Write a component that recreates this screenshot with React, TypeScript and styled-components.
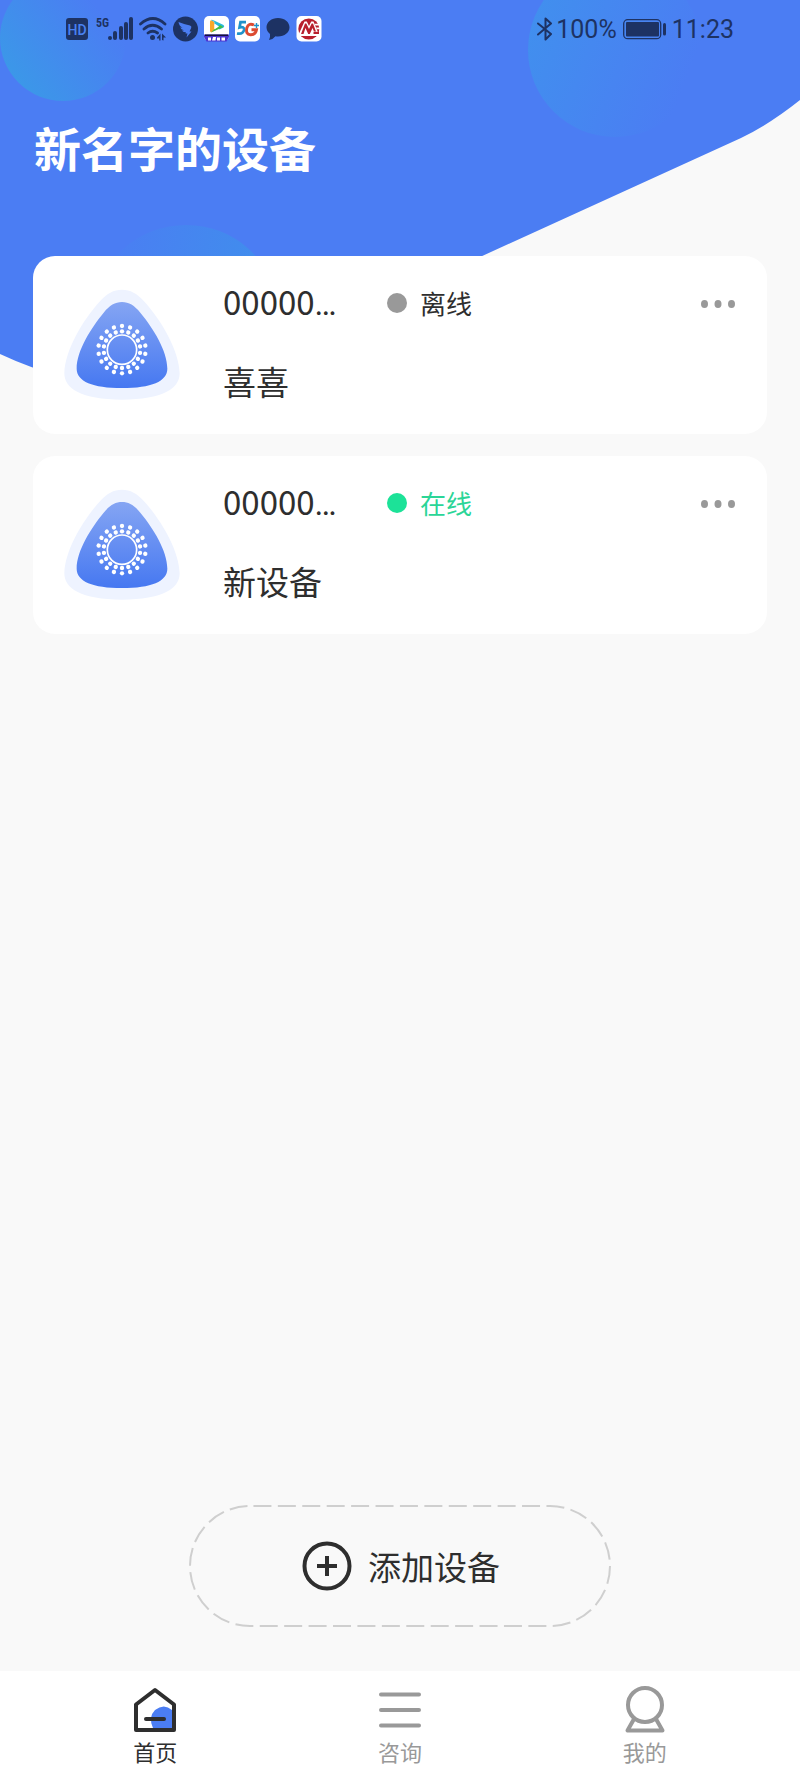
import React from "react";
import styled, { createGlobalStyle } from "styled-components";

const GlobalStyle = createGlobalStyle`
  *, *::before, *::after { box-sizing: border-box; }
  body {
    margin: 0;
    background: #f9f9f9;
    color: #2e2e2e;
    font-family: "Noto Sans CJK SC", "Noto Sans", sans-serif;
  }
  button { font: inherit; color: inherit; border: 0; padding: 0; background: none; cursor: pointer; }
`;

const INK = "#1d3263";

const Screen = styled.div`
  position: relative;
  display: flex;
  flex-direction: column;
  min-height: 100vh;
  isolation: isolate;
`;

const Backdrop = styled.svg`
  position: absolute;
  top: 0;
  left: 0;
  z-index: -1;
  width: 100%;
  height: 420px;
`;

const StatusBar = styled.div`
  display: flex;
  align-items: center;
  justify-content: space-between;
  height: 58px;
  padding: 0 66px;
  color: ${INK};
  font-family: Roboto, sans-serif;
  font-size: 25px;
  line-height: 32px;
`;

const StatusGroup = styled.div<{ $gap: number }>`
  display: flex;
  align-items: center;
  gap: ${(p) => p.$gap}px;
`;

const StatusText = styled.span`
  padding-top: 2px;
`;

const Glyph = styled.svg`
  display: block;
  flex: none;
`;

const Title = styled.h1`
  margin: 59px 34px 79px;
  color: #fff;
  font-size: 47px;
  font-weight: 700;
  line-height: 60px;
`;

const DeviceList = styled.ul`
  display: flex;
  flex-direction: column;
  gap: 22px;
  margin: 0;
  padding: 0 33px;
  list-style: none;
`;

const Card = styled.li`
  display: flex;
  align-items: flex-start;
  gap: 43px;
  height: 178px;
  padding: 25px 32px 0 31px;
  border-radius: 22px;
  background: #fff;
`;

const DeviceFigure = styled.div`
  padding-top: 8px;
`;

const Details = styled.div`
  flex: 1;
  min-width: 0;
`;

const DetailsTop = styled.div`
  display: flex;
  align-items: center;
  margin-bottom: 37px;
`;

const Serial = styled.span`
  width: 120px;
  margin-right: 44px;
  font-size: 33px;
  line-height: 40px;
  white-space: nowrap;
`;

const Ellipsis = styled.span`
  font-family: Roboto, sans-serif;
`;

const Status = styled.span<{ $online: boolean }>`
  display: flex;
  align-items: center;
  gap: 13px;
  color: ${(p) => (p.$online ? "#2bd597" : "#2e2e2e")};
  font-size: 26px;
  line-height: 42px;

  &::before {
    content: "";
    width: 20px;
    height: 20px;
    border-radius: 50%;
    background: ${(p) => (p.$online ? "#1ce298" : "#999")};
  }
`;

const MoreButton = styled.button`
  display: flex;
  align-items: center;
  height: 40px;
  margin-left: auto;
`;

const DeviceName = styled.div`
  font-size: 33px;
  line-height: 40px;
`;

const AddButton = styled.button`
  position: relative;
  display: flex;
  align-items: center;
  justify-content: center;
  gap: 16px;
  width: 422px;
  height: 122px;
  margin: auto auto 44px;
  padding-left: 2px;
  font-size: 33px;
  line-height: 40px;
`;

const DashedOutline = styled.svg`
  position: absolute;
  inset: 0;
`;

const TabBar = styled.nav`
  display: flex;
  height: 107px;
  padding: 0 33px;
  background: #fff;
`;

const Tab = styled.a<{ $active?: boolean }>`
  display: flex;
  flex: 1;
  flex-direction: column;
  align-items: center;
  gap: 2px;
  padding-top: 14px;
  color: ${(p) => (p.$active ? "#2e2e2e" : "#999")};
  font-size: 22px;
  line-height: 32px;
  text-decoration: none;
`;

const HeaderBackdrop = () => (
  <Backdrop viewBox="0 0 800 420" preserveAspectRatio="none" aria-hidden="true">
    <defs>
      <linearGradient id="orbA" x1="0.15" y1="0.9" x2="0.85" y2="0.35">
        <stop offset="0" stopColor="#3b98e8" />
        <stop offset="1" stopColor="#4b7df3" />
      </linearGradient>
      <linearGradient id="orbB" x1="0" y1="0.35" x2="0.9" y2="0.7">
        <stop offset="0" stopColor="#418fee" />
        <stop offset="1" stopColor="#4b7df3" />
      </linearGradient>
      <linearGradient id="orbC" x1="1" y1="0.4" x2="0" y2="0.2">
        <stop offset="0" stopColor="#3f8fec" />
        <stop offset="1" stopColor="#4b7df3" />
      </linearGradient>
    </defs>
    <path
      d="M0 0H800V100Q770 124 741 138L480 257L300 341Q180 396 60 376Q30 368 0 354Z"
      fill="#4b7df3"
    />
    <circle cx="63" cy="38" r="63" fill="url(#orbA)" />
    <circle cx="615" cy="50" r="87" fill="url(#orbB)" />
    <ellipse cx="186" cy="305" rx="88" ry="80" fill="url(#orbC)" />
  </Backdrop>
);

const HdIcon = () => (
  <Glyph width="24" height="26" viewBox="0 0 24 26">
    <rect x="0" y="2" width="22" height="22" rx="3" fill={INK} />
    <text x="11" y="18.500" textAnchor="middle" fontFamily="Roboto" fontWeight="500" fontSize="14" fill="#4a82f1">
      HD
    </text>
  </Glyph>
);

const SignalIcon = () => (
  <Glyph width="37" height="26" viewBox="0 0 37 26" fill={INK}>
    <text x="0" y="11" fontFamily="Roboto Condensed, Roboto" fontWeight="700" fontSize="12">
      5G
    </text>
    <rect x="12" y="20" width="4" height="4" rx="2" />
    <rect x="17" y="15" width="4" height="9" rx="2" />
    <rect x="23" y="10" width="4" height="14" rx="2" />
    <rect x="28" y="6" width="4" height="18" rx="2" />
    <rect x="33" y="1" width="4" height="23" rx="2" />
  </Glyph>
);

const WifiIcon = () => (
  <Glyph width="28" height="26" viewBox="0 0 28 26" fill="none" stroke={INK} strokeWidth="2.800" strokeLinecap="round">
    <path d="M1.500 8Q14 -3 26 8M5 13Q13.500 5.500 22.500 13M9 17Q13.500 13.500 18.500 17" />
    <circle cx="13.500" cy="21.500" r="2.500" fill={INK} stroke="none" />
    <path d="M18 21.500L21.500 17.500V24.500H20.200V22.500H18ZM23 24V17.500L27 21.500H24.500V24.500Z" fill={INK} stroke="none" />
  </Glyph>
);

const WingIcon = () => (
  <Glyph width="25" height="26" viewBox="0 0 25 26">
    <circle cx="12.500" cy="13" r="12.500" fill={INK} />
    <path
      d="M5.500 6Q11 8 17 9.500Q19 10.200 18.200 12L16.500 15.500H18.500L13.500 21.500L14.500 17.500H12.500L13 16.200Q10 16.500 9 14.600L11 14.200Q8 13.500 7.200 11.500L9.500 11.600Q6 10 5.500 6Z"
      fill="#4b7df3"
    />
  </Glyph>
);

const VideoAppIcon = () => (
  <Glyph width="25" height="26" viewBox="0 0 25 26">
    <rect width="25" height="25" rx="5" fill="#fff" />
    <path d="M8 4.500Q6 3.500 6 6V14.500Q6 17 8 16L10.500 14.500V6Z" fill="#f8a72a" />
    <path d="M7 4Q8 3.500 10 4.600L19.500 9Q21 10 19.500 11.500L15.500 13.500L10.500 8V6Z" fill="#26b8dc" />
    <path d="M7 16.500L19.500 11L16 9L10.500 13Z" fill="#46bd43" />
    <path d="M10.500 7.500L15 10.400L10.500 13.200Z" fill="#fff" />
    <path d="M0 18.500H25V21L22.500 25.500H2.500L0 21Z" fill="#4b34d0" />
    <path d="M1 18.500H24V20H1Z" fill="#15133c" />
    <path d="M4 24.500V21.500H7V24.500ZM8 24.500L9 21H12L11.500 24.500ZM13 21.500H16V24.500H13ZM17.500 21.500H21V24.500H17.500Z" fill="#fff" />
  </Glyph>
);

const FiveGAppIcon = () => (
  <Glyph width="25" height="26" viewBox="0 0 25 26">
    <rect width="25" height="25.500" rx="5" fill="#fff" />
    <path d="M11 6.200H5.500L4.500 11.500Q9.500 10 9 14Q8 18.500 2 17.500" fill="none" stroke="#1f92c9" strokeWidth="2.700" />
    <path d="M19 9Q13.500 6.500 11.800 12Q10.500 18.500 15.500 18.800Q20.500 19 21.500 13.800H16.500" fill="none" stroke="#dc4b31" strokeWidth="2.900" />
    <path d="M21.500 7V12M19 9.500H24" stroke="#1f92c9" strokeWidth="1.400" />
  </Glyph>
);

const ChatIcon = () => (
  <Glyph width="24" height="26" viewBox="0 0 24 26">
    <path
      d="M12 2C18.500 2 23.500 6.200 23.500 11.300C23.500 16.500 18.500 20.500 12 20.500Q10.500 20.500 9.500 20.300Q7 23.500 3 24Q4.500 21.500 4 18C1.800 16.300 .5 14 .5 11.300C.5 6.200 5.500 2 12 2Z"
      fill={INK}
    />
  </Glyph>
);

const BankAppIcon = () => (
  <Glyph width="26" height="26" viewBox="0 0 25 26">
    <rect width="25" height="25.500" rx="5" fill="#fff" />
    <circle cx="12.300" cy="13" r="10.500" fill="#b81f2d" />
    <path d="M2.500 17.500L8 5.500H10.300L12.500 10L14.700 5.500H17L22 17.500V20H3Z" fill="#fff" />
    <path d="M4.500 18L8.500 7.500H9.800L12.500 13L15.200 7.500H16.500L19.500 15.500H17.500L16 12L13.300 18H11.700L9 12L7 18Z" fill="#b81f2d" />
    <path d="M18 7.800H23V9.600H18.800ZM19.500 11.500H24V13.200H20.200Z" fill="#fff" />
    <path d="M17 15.800H22.500V18H17Z" fill="#b81f2d" />
  </Glyph>
);

const BluetoothIcon = () => (
  <Glyph width="16" height="26" viewBox="0 0 16 26" fill="none" stroke={INK} strokeWidth="2" strokeLinejoin="round" strokeLinecap="round">
    <path d="M1 7.500L14 18L8.500 23.500V2.500L14 7.500L1 18.500" />
  </Glyph>
);

const BatteryIcon = () => (
  <Glyph width="43" height="26" viewBox="0 0 43 26">
    <rect x="0.700" y="3.700" width="37" height="19" rx="4" fill="none" stroke={INK} strokeWidth="1.300" />
    <rect x="3" y="6" width="33" height="14.500" rx="1" fill={INK} />
    <rect x="40" y="7" width="3" height="12.500" rx="1.500" fill={INK} />
  </Glyph>
);

const DOT_STEPS = Array.from({ length: 18 }, (_, i) => i * 20);

const DeviceIcon = ({ id }: { id: string }) => (
  <Glyph width="116" height="111" viewBox="73 57 348 333" aria-hidden="true">
    <defs>
      <linearGradient id={id} x1="0" y1="0" x2="0" y2="1">
        <stop offset="0" stopColor="#85a5f3" />
        <stop offset="1" stopColor="#4678f1" />
      </linearGradient>
    </defs>
    <path
      d="M247 59C272 59 292 70 315 96C365 152 418 240 420 310C420 355 370 389 247 389C124 389 74 355 74 310C76 240 129 152 179 96C202 70 222 59 247 59Z"
      fill="#eef3ff"
    />
    <path
      d="M247 96C268 96 284 106 302 128C340 174 383 242 383 296C383 334 335 354 247 354C159 354 111 334 111 296C111 242 154 174 192 128C210 106 226 96 247 96Z"
      fill={`url(#${id})`}
    />
    <circle cx="247" cy="239" r="44" fill="none" stroke="#fff" strokeWidth="5" />
    {DOT_STEPS.map((angle) => (
      <g key={angle} transform={`rotate(${angle} 247 239)`} fill="#fff">
        <circle cx="247" cy="184" r="6.500" />
        <circle cx="247" cy="168" r="6.500" />
      </g>
    ))}
  </Glyph>
);

const MoreIcon = () => (
  <Glyph width="34" height="10" viewBox="0 0 34 10" fill="#999">
    <ellipse cx="3.500" cy="6" rx="3.500" ry="4" />
    <ellipse cx="17" cy="6" rx="3.500" ry="4" />
    <ellipse cx="30.500" cy="6" rx="3.500" ry="4" />
  </Glyph>
);

const PlusIcon = () => (
  <Glyph width="50" height="50" viewBox="0 0 50 50" fill="none" stroke="#2e2e2e" strokeWidth="4">
    <circle cx="25" cy="25" r="22.500" />
    <path d="M15 25H35M25 15V35" />
  </Glyph>
);

const HomeIcon = () => (
  <Glyph width="44" height="48" viewBox="0 0 44 48">
    <path d="M39 24V43H20Q15 32 22 25Q31 18 39 25Z" fill="#4b7df3" />
    <path
      d="M3 19.500L22 5L41 19.500V45H3Z"
      fill="none"
      stroke="#2e2e2e"
      strokeWidth="4"
      strokeLinejoin="round"
    />
    <path d="M13 34H31" stroke="#2e2e2e" strokeWidth="4" strokeLinecap="round" />
  </Glyph>
);

const ListIcon = () => (
  <Glyph width="44" height="48" viewBox="0 0 44 48" stroke="#999" strokeWidth="4" strokeLinecap="round">
    <path d="M3 9.500H41M3 25H41M3 40.500H41" />
  </Glyph>
);

const ProfileIcon = () => (
  <Glyph width="44" height="48" viewBox="0 0 44 48" fill="none" stroke="#999" strokeWidth="4" strokeLinejoin="round">
    <circle cx="22" cy="20" r="17" />
    <path d="M11 34L4.500 45.500H39.500L33 34" />
  </Glyph>
);

const devices = [
  { id: "device-1", serial: "00000", name: "喜喜", online: false },
  { id: "device-2", serial: "00000", name: "新设备", online: true },
];

export default function App() {
  return (
    <Screen>
      <GlobalStyle />
      <HeaderBackdrop />
      <StatusBar>
        <StatusGroup $gap={6}>
          <HdIcon />
          <SignalIcon />
          <WifiIcon />
          <WingIcon />
          <VideoAppIcon />
          <FiveGAppIcon />
          <ChatIcon />
          <BankAppIcon />
        </StatusGroup>
        <StatusGroup $gap={6}>
          <StatusGroup $gap={3}>
            <BluetoothIcon />
            <StatusText>100%</StatusText>
          </StatusGroup>
          <BatteryIcon />
          <StatusText>11:23</StatusText>
        </StatusGroup>
      </StatusBar>

      <Title>新名字的设备</Title>

      <DeviceList>
        {devices.map((device) => (
          <Card key={device.id}>
            <DeviceFigure>
              <DeviceIcon id={device.id} />
            </DeviceFigure>
            <Details>
              <DetailsTop>
                <Serial>
                  {device.serial}
                  <Ellipsis>…</Ellipsis>
                </Serial>
                <Status $online={device.online}>{device.online ? "在线" : "离线"}</Status>
                <MoreButton type="button" aria-label="更多">
                  <MoreIcon />
                </MoreButton>
              </DetailsTop>
              <DeviceName>{device.name}</DeviceName>
            </Details>
          </Card>
        ))}
      </DeviceList>

      <AddButton type="button">
        <DashedOutline width="422" height="122" viewBox="0 0 422 122" fill="none" aria-hidden="true">
          <rect
            x="1"
            y="1"
            width="420"
            height="120"
            rx="60"
            stroke="#cfcfcf"
            strokeWidth="2"
            strokeDasharray="18 6.42"
            strokeDashoffset="21"
          />
        </DashedOutline>
        <PlusIcon />
        添加设备
      </AddButton>

      <TabBar>
        <Tab href="#home" $active aria-current="page">
          <HomeIcon />
          首页
        </Tab>
        <Tab href="#consult">
          <ListIcon />
          咨询
        </Tab>
        <Tab href="#mine">
          <ProfileIcon />
          我的
        </Tab>
      </TabBar>
    </Screen>
  );
}
